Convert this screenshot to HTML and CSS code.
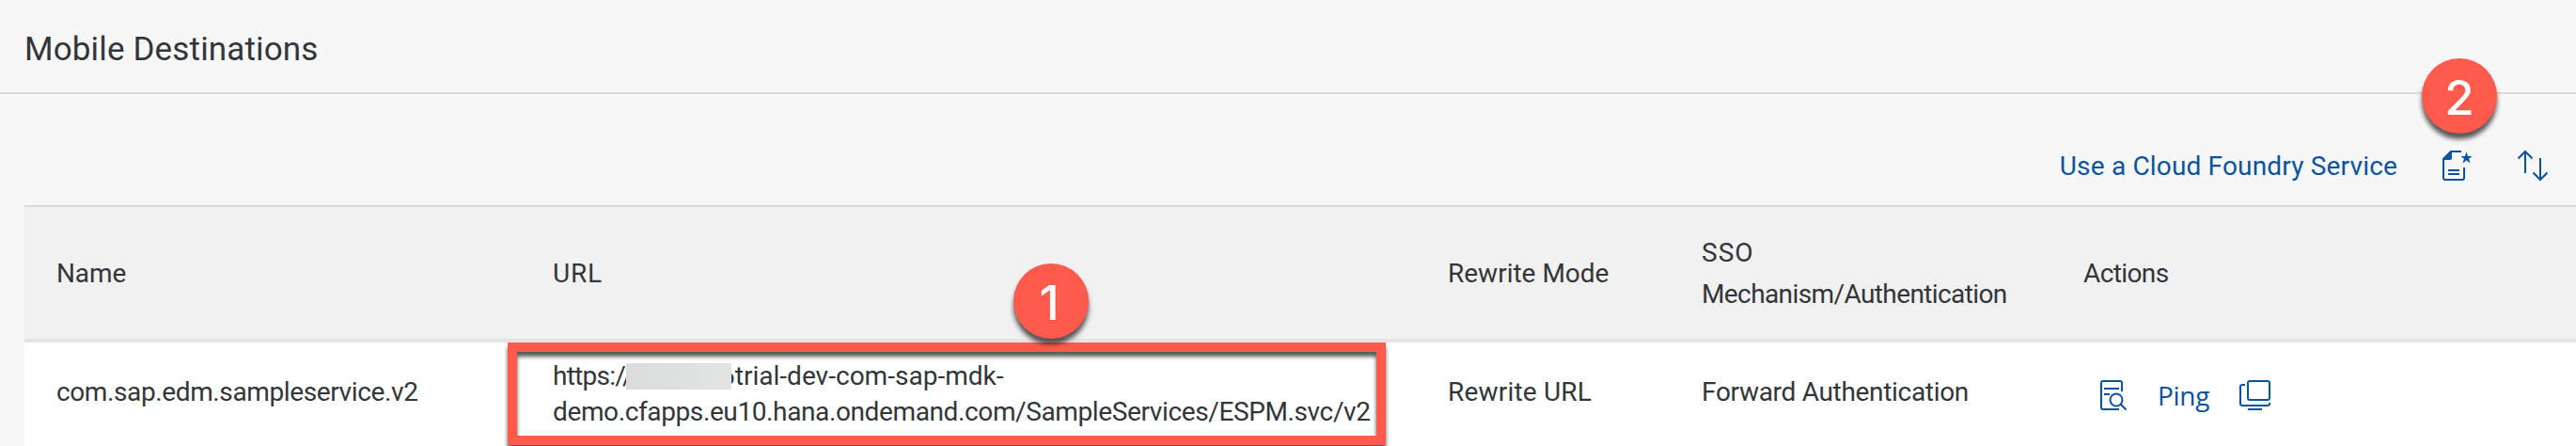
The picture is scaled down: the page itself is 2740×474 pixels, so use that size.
FILE: index.html
```html
<!DOCTYPE html>
<html lang="en">
<head>
<meta charset="utf-8">
<title>Mobile Destinations</title>
<link rel="stylesheet" href="styles.css">
</head>
<body>
<header class="page-header"><h1 class="title">Mobile Destinations</h1></header>
<div class="toolbar">
  <a class="link service-link">Use a Cloud Foundry Service</a>
  <svg class="icon create-icon" width="32" height="32" viewBox="0 0 32 32">
    <path d="M20 1H9L1 9v20q0 2 2 2h18q2 0 2-2V18" fill="none" stroke="currentColor" stroke-width="2"/>
    <path d="M9 0h1v8q0 2-2 2H0V9z" fill="currentColor"/>
    <path d="M6 21h12M6 25h12" stroke="currentColor" stroke-width="2"/>
    <path d="M25.500 1.500l1.600 4.400h4.600l-3.600 2.800 1.400 4.700-4-2.800-4 2.800 1.400-4.700-3.600-2.800h4.600z" fill="currentColor"/>
  </svg>
  <svg class="icon sort-icon" width="32" height="32" viewBox="0 0 32 32" fill="none" stroke="currentColor" stroke-width="2">
    <path d="M8 24V1M.5 8.500L8 1l7.500 7.500M24 8v23M16.500 23.500L24 31l7.500-7.500"/>
  </svg>
  <span class="marker marker-two">2</span>
</div>
<main class="table">
  <div class="row head">
    <div class="h-name">Name</div>
    <div class="h-url">URL</div>
    <div>Rewrite Mode</div>
    <div><span class="h-sso">SSO</span><br><span class="h-mechanism">Mechanism/Authentication</span></div>
    <div class="h-actions">Actions</div>
  </div>
  <div class="row body">
    <div class="cell name">com.sap.edm.sampleservice.v2</div>
    <div class="url-cell">
      <div class="url-line"><span class="url-scheme">https://</span><span class="redacted"></span><span class="url-host">6trial-dev-com-sap-mdk-</span></div>
      <div class="url-line url-path">demo.cfapps.eu10.hana.ondemand.com/SampleServices/ESPM.svc/v2</div>
      <span class="highlight"></span>
      <span class="marker marker-one">1</span>
    </div>
    <div class="cell mode">Rewrite URL</div>
    <div class="cell auth">Forward Authentication</div>
    <div class="actions">
      <svg class="icon" width="30" height="32" viewBox="0 0 30 32" fill="none" stroke="currentColor" stroke-width="2">
        <path d="M23 12V3q0-2-2-2H3Q1 1 1 3v26q0 2 2 2h17M4 9h16M4 15h6"/>
        <circle cx="17" cy="21" r="6.500"/><path d="M21.500 25.500l6 6"/>
      </svg>
      <a class="link ping">Ping</a>
      <svg class="icon" width="33" height="32" viewBox="0 0 33 32" fill="none" stroke="currentColor" stroke-width="2">
        <rect x="9" y="1" width="23" height="20" rx="2"/>
        <path d="M6 5H3Q1 5 1 7v18q0 2 2 2h27q2 0 2-2v-1M9 31h15"/>
      </svg>
    </div>
  </div>
</main>
</body>
</html>
```
FILE: styles.css
```css
* { box-sizing: border-box; }
body { margin: 0; height: 474px; overflow: hidden; background: #f7f7f7; color: #32363a; font: 28px/38px Roboto, sans-serif; }
.page-header { height: 100px; padding: 32px 26px 0; border-bottom: 2px solid #d9d9d9; }
.title { margin: 0; font-size: 35px; line-height: 42px; font-weight: 400; letter-spacing: .15px; }
.link, .icon { color: #0854a0; }
.icon { display: block; flex: none; overflow: visible; }
.toolbar { position: relative; height: 118px; display: flex; justify-content: flex-end; padding: 58px 30px 0 0; }
.service-link { letter-spacing: .17px; }
.create-icon { margin: 2px 0 0 48px; }
.sort-icon { margin: 2px 0 0 48px; }
.marker { position: absolute; width: 80px; height: 80px; border-radius: 50%; background: #ff5a4c; color: #fff; text-align: center; font: 500 51px/83px Inter, sans-serif; box-shadow: 0 6px 5px rgba(0,0,0,.65); }
.marker-two { right: 84px; top: -38px; }
.table { margin-left: 26px; border-top: 2px solid #d9d9d9; }
.row { display: grid; grid-template-columns: 528px 952px 270px 406px 1fr; align-items: center; padding-left: 34px; }
.head { height: 144px; padding-top: 1px; background: #f1f1f1; border-bottom: 4px solid #e4e4e4; line-height: 44px; }
.h-name { letter-spacing: -.1px; }
.h-url { letter-spacing: .8px; }
.h-sso { letter-spacing: 1px; }
.h-mechanism { letter-spacing: -.6px; }
.h-actions { letter-spacing: -.6px; }
.body { height: 110px; background: #fff; }
.cell { padding-bottom: 4px; }
.name { letter-spacing: -.38px; }
.mode { letter-spacing: .2px; }
.auth { letter-spacing: -.31px; }
.url-cell { position: relative; }
.url-line { display: flex; white-space: nowrap; }
.url-scheme { width: 78px; letter-spacing: -.75px; }
.redacted { position: relative; width: 112px; height: 28px; margin-top: 5px; background: linear-gradient(100deg, #dadbdb, #e3e4e4); }
.url-host { margin-left: -12px; letter-spacing: .02px; }
.url-path { letter-spacing: -.38px; }
.highlight { position: absolute; left: -48px; top: -17px; width: 934px; height: 109px; border: 10px solid #ff5a4c; filter: drop-shadow(0 5px 2px rgba(0,0,0,.65)); }
.marker-one { left: 490px; top: -101px; padding-right: 4px; }
.actions { display: flex; align-items: center; padding: 2px 0 0 18px; }
.ping { margin: 0 31px; width: 56px; font-family: "Open Sans", sans-serif; letter-spacing: -.3px; }
```
